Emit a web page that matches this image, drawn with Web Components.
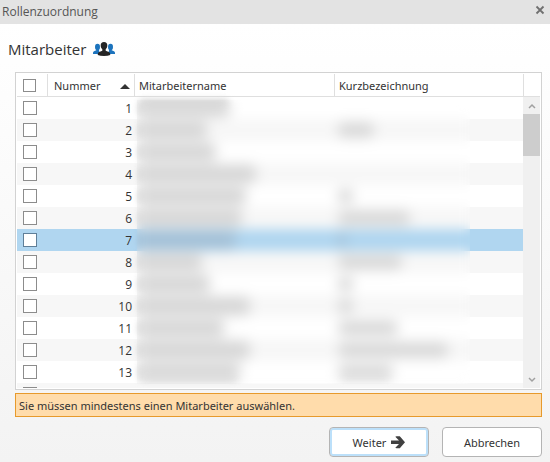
<!DOCTYPE html>
<html lang="de">
<head>
<meta charset="utf-8">
<title>Rollenzuordnung</title>
<style>
body { margin: 0; font: 11px/16px "Noto Sans", "Open Sans", sans-serif; color: #333; }
</style>
</head>
<body>
<role-dialog>
  <span slot="title">Rollenzuordnung</span>
  <section-heading>Mitarbeiter</section-heading>
  <employee-grid></employee-grid>
  <warning-message>Sie müssen mindestens einen Mitarbeiter auswählen.</warning-message>
  <dialog-button slot="actions" primary>Weiter
    <svg slot="icon" width="14" height="14" viewBox="0 0 14 14" aria-hidden="true"><path d="M0 4.500H8L4.300 0.700L5.500 0.200H8.800L14 6.200L8.800 12.200H5.500L4.300 11.700L8 7.900H0Z" fill="#404040"/></svg>
  </dialog-button>
  <dialog-button slot="actions">Abbrechen</dialog-button>
</role-dialog>

<script>
function define(name, html, setup) {
  const template = document.createElement('template');
  template.innerHTML = html;
  customElements.define(name, class extends HTMLElement {
    constructor() {
      super();
      this.attachShadow({ mode: 'open' }).append(template.content.cloneNode(true));
      if (setup) setup(this.shadowRoot);
    }
  });
}

define('role-dialog', `
  <style>
    :host { display: flex; flex-direction: column; height: 100vh; box-sizing: border-box; background: linear-gradient(#fff 24px, #f3f3f3); }
    header { display: flex; align-items: center; justify-content: space-between; height: 24px; flex: none; padding: 0 5px 0 2px; background: #e3e3e3; color: #555; font: 12px/16px "Open Sans", "Noto Sans", sans-serif; }
    header slot { display: block; }
    button { display: flex; padding: 0; border: 0; background: none; margin-bottom: 4px; }
    main { flex: 1; min-height: 0; display: flex; flex-direction: column; padding: 0 8px 0 15px; }
    footer { display: flex; justify-content: flex-end; gap: 13px; padding: 10px 8px 5px; }
  </style>
  <header><slot name="title"></slot>
    <button aria-label="Schließen"><svg width="10" height="10" viewBox="0 0 10 10"><path d="M1.500 1.500L8.500 8.500M8.500 1.500L1.500 8.500" stroke="#707070" stroke-width="1.800"/></svg></button>
  </header>
  <main><slot></slot></main>
  <footer><slot name="actions"></slot></footer>`);

define('section-heading', `
  <style>
    :host { display: flex; align-items: center; gap: 7px; height: 48px; flex: none; margin-left: -7px; padding-top: 2px; box-sizing: border-box; }
    h1 { margin: 0; font: 15px/20px "Open Sans", "Noto Sans", sans-serif; }
  </style>
  <h1><slot></slot></h1>
  <svg width="22" height="14" viewBox="0 0 22 14" aria-hidden="true">
    <g fill="#1c73bd"><ellipse cx="4.500" cy="5" rx="2.500" ry="3.200"/><path d="M0 12V10.800Q0 9.500 1.500 9L3.300 8.200V6H6V8.500L7 12Z"/>
    <ellipse cx="17.500" cy="5" rx="2.500" ry="3.200"/><path d="M22 12V10.800Q22 9.500 20.500 9L18.700 8.200V6H16V8.500L15 12Z"/></g>
    <path d="M11 0C8.800 0 7.600 1.400 7.700 3.500C7.700 5.300 8.400 6.500 9.300 7.300V8.700L6.200 10Q4.800 10.600 4.800 12V13Q7 14 11 14T17.200 13V12Q17.200 10.600 15.800 10L12.700 8.700V7.300C13.600 6.500 14.300 5.300 14.300 3.500C14.400 1.400 13.200 0 11 0Z" fill="#252525"/>
  </svg>`);

define('employee-grid', `
  <style>
    :host { display: grid; grid-template-columns: 1fr 17px; position: relative; flex: 1; min-height: 0; overflow: hidden; box-sizing: border-box; border: 1px solid #d2d2d2; padding: 1px; background: #fff; }
    .rows { overflow: hidden; min-height: 0; }
    table { width: 100%; table-layout: fixed; border-collapse: separate; border-spacing: 0; }
    col.tick { width: 31px; } col.number { width: 87px; } col.name { width: 200px; }
    th, td { height: 22px; padding: 0; box-sizing: border-box; text-align: left; font-weight: 400; }
    th { height: 23px; padding: 2px 0 0 4px; border-bottom: 1px solid #dfdfdf; border-right: 1px solid #dfdfdf; }
    th:last-child { border-right: 0; }
    th:first-child, td:first-child { padding: 0 0 0 6px; }
    th button { display: flex; width: 100%; align-items: center; justify-content: space-between; padding: 0 4px 0 2px; border: 0; background: none; color: inherit; font: inherit; }
    td.num { text-align: right; padding: 1px 3px 0 0; font: 12px/16px "Open Sans", "Noto Sans", sans-serif; }
    tbody tr:nth-child(even) { background: #f7f7f7; }
    tbody tr.current { background: #b0d6f0; }
    input { appearance: none; display: block; width: 14px; height: 14px; margin: 0; box-sizing: border-box; border: 1px solid #8c8c8c; background: #fff; }
    th input { width: 13px; height: 13px; }
    .current input { border-color: #5f7f98; }
    i { display: block; height: 14px; margin-left: 3px; background: #d6d6d6; border-radius: 6px; filter: blur(3px); }
    .name i { height: 18px; }
    .current i { background: #a4c0d6; }
    .veil { position: absolute; left: 121px; right: 71px; top: 27px; bottom: 5px; backdrop-filter: blur(6px); }
    aside { display: flex; flex-direction: column; min-height: 0; }
    .cap { height: 22px; flex: none; border-left: 1px solid #dfdfdf; border-bottom: 1px solid #dfdfdf; }
    .bar { flex: 1; display: flex; flex-direction: column; background: #f0f0f0; }
    .bar button { display: flex; align-items: center; justify-content: center; height: 17px; flex: none; padding: 0; border: 0; background: none; }
    .thumb { height: 42px; background: #cdcdcd; margin-bottom: auto; }
  </style>
  <div class="rows"><table>
    <colgroup><col class="tick"><col class="number"><col class="name"><col></colgroup>
    <thead><tr>
      <th><input type="checkbox" aria-label="Alle auswählen"></th>
      <th><button>Nummer<svg width="10" height="5" viewBox="0 0 10 5" aria-hidden="true"><path d="M0 5L5 0L10 5Z" fill="#333"/></svg></button></th>
      <th>Mitarbeitername</th><th>Kurzbezeichnung</th>
    </tr></thead>
    <tbody></tbody>
  </table></div>
  <aside><div class="cap"></div><div class="bar">
    <button aria-label="Nach oben"><svg width="8" height="6" viewBox="0 0 8 6"><path d="M1 5L4 2L7 5" fill="none" stroke="#a0a0a0" stroke-width="1.500"/></svg></button>
    <div class="thumb"></div>
    <button aria-label="Nach unten"><svg width="8" height="6" viewBox="0 0 8 6"><path d="M1 1L4 4L7 1" fill="none" stroke="#a0a0a0" stroke-width="1.500"/></svg></button>
  </div></aside>
  <div class="veil"></div>`, root => {
  // Widths of the obscured name and short name in each row
  const widths = [[92, 0], [69, 36], [78, 0], [118, 0], [108, 15], [104, 72], [98, 8], [64, 64], [72, 15], [112, 15], [86, 60], [112, 110], [102, 55], [0, 0]];
  root.querySelector('tbody').innerHTML = widths.map(([name, short], index) => {
    const number = index + 1;
    return `<tr class="${number === 7 ? 'current' : ''}"><td><input type="checkbox" aria-label="Mitarbeiter ${number}"></td>
      <td class="num">${number < 14 ? number : ''}</td><td class="name"><i style="width:${name}px"></i></td><td><i style="width:${short}px"></i></td></tr>`;
  }).join('');
});

define('warning-message', `
  <style>:host { display: block; flex: none; margin-top: 3px; padding: 4px 3px 2px; border: 1px solid #e79a2c; background: #ffdcab; }</style>
  <slot></slot>`);

define('dialog-button', `
  <style>
    :host { display: block; flex: 0 0 100px; }
    button { display: flex; align-items: center; justify-content: center; gap: 5px; width: 100%; height: 30px; padding: 2px 0 0; border: 1px solid #b4b4b4; border-radius: 4px; background: #fff; color: inherit; font: inherit; }
    :host([primary]) button { box-shadow: inset 0 0 0 2px #bce0fa; }
  </style>
  <button><span><slot></slot></span><slot name="icon"></slot></button>`);
</script>
</body>
</html>
